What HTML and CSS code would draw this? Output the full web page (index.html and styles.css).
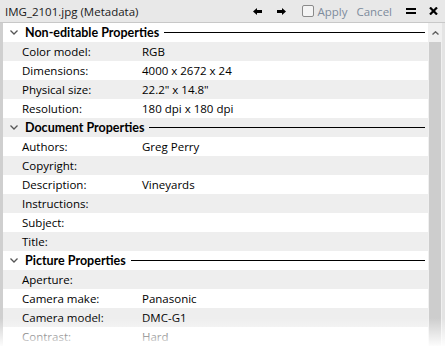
FILE: index.html
```html
<!DOCTYPE html>
<html lang="en">
<head>
    <meta charset="UTF-8">
    <title>IMG_2101.jpg (Metadata)</title>
    <link rel="stylesheet" href="styles.css">
</head>
<body>

    <div class="window">
        <!-- Title bar -->
        <div class="titlebar">
            <span class="title">IMG_2101.jpg (Metadata)</span>
            <div class="tools">
                <svg class="tool back" width="9" height="7" viewBox="0 0 9 7"><path d="M0 3.5L4 0V2H9V5H4V7Z" fill="#000"/></svg>
                <svg class="tool fwd" width="9" height="7" viewBox="0 0 9 7"><path d="M9 3.5L5 0V2H0V5H5V7Z" fill="#000"/></svg>
                <span class="check"></span>
                <span class="tool-text apply">Apply</span>
                <span class="tool-text cancel">Cancel</span>
                <svg class="tool menu" width="10" height="6" viewBox="0 0 10 6"><rect x="0" y="0" width="10" height="2" fill="#000"/><rect x="0" y="4" width="10" height="2" fill="#000"/></svg>
                <svg class="tool close" width="9" height="8" viewBox="0 0 9 8"><path d="M1 0.5L8 7.5M8 0.5L1 7.5" stroke="#000" stroke-width="2.2"/></svg>
            </div>
        </div>

        <!-- Property list -->
        <div class="body">
            <div class="list">
                <div class="row header"><svg class="chevron" width="8" height="5" viewBox="0 0 8 5"><path d="M0.5 0.5L4 4L7.5 0.5" fill="none" stroke="#555" stroke-width="1.3"/></svg><span>Non-editable Properties</span></div>
                <div class="row"><span class="label">Color model:</span><span class="value">RGB</span></div>
                <div class="row"><span class="label">Dimensions:</span><span class="value">4000 x 2672 x 24</span></div>
                <div class="row"><span class="label">Physical size:</span><span class="value">22.2" x 14.8"</span></div>
                <div class="row"><span class="label">Resolution:</span><span class="value">180 dpi x 180 dpi</span></div>

                <div class="row header"><svg class="chevron" width="8" height="5" viewBox="0 0 8 5"><path d="M0.5 0.5L4 4L7.5 0.5" fill="none" stroke="#555" stroke-width="1.3"/></svg><span>Document Properties</span></div>
                <div class="row"><span class="label">Authors:</span><span class="value">Greg Perry</span></div>
                <div class="row"><span class="label">Copyright:</span><span class="value"></span></div>
                <div class="row"><span class="label">Description:</span><span class="value">Vineyards</span></div>
                <div class="row"><span class="label">Instructions:</span><span class="value"></span></div>
                <div class="row"><span class="label">Subject:</span><span class="value"></span></div>
                <div class="row"><span class="label">Title:</span><span class="value"></span></div>

                <div class="row header"><svg class="chevron" width="8" height="5" viewBox="0 0 8 5"><path d="M0.5 0.5L4 4L7.5 0.5" fill="none" stroke="#555" stroke-width="1.3"/></svg><span>Picture Properties</span></div>
                <div class="row"><span class="label">Aperture:</span><span class="value"></span></div>
                <div class="row"><span class="label">Camera make:</span><span class="value">Panasonic</span></div>
                <div class="row"><span class="label">Camera model:</span><span class="value">DMC-G1</span></div>
                <div class="row"><span class="label">Contrast:</span><span class="value">Hard</span></div>
            </div>

            <!-- Scrollbar -->
            <div class="scrollbar">
                <svg class="scroll-up" width="7" height="4" viewBox="0 0 7 4"><path d="M0.5 3.5L3.5 0.8L6.5 3.5" fill="none" stroke="#606060" stroke-width="1.4"/></svg>
                <div class="thumb"></div>
            </div>
        </div>

        <!-- Fade at the bottom edge -->
        <div class="fade"></div>
    </div>

</body>
</html>
```

FILE: styles.css
```css
/* Metadata window */
body {
    margin: 0;
    background-color: #ffffff;
    font-family: "Open Sans", "Noto Sans", sans-serif;
    font-size: 11.5px;
    color: #000;
}

.window {
    position: relative;
    width: 445px;
    height: 346px;
    overflow: hidden;
    display: flex;
    flex-direction: column;
}

/* Title bar */
.titlebar {
    height: 22px;
    flex-shrink: 0;
    background-color: #e8e8e8;
    border-bottom: 1px solid #c8c8c8;
    display: flex;
    align-items: center;
    padding-left: 5px;
    font-size: 11.5px;
}

.title {
    color: #1a1a1a;
    white-space: nowrap;
}

.tools {
    margin-left: auto;
    display: flex;
    align-items: center;
}

.tool {
    display: block;
}

.back {
    margin-right: 15px;
}

.fwd {
    margin-right: 16px;
}

.check {
    width: 10px;
    height: 10px;
    border: 1px solid #8a8a8a;
    border-radius: 2px;
    background-color: #f4f4f4;
    margin-right: 3px;
}

.tool-text {
    color: #7d8b9c;
}

.apply {
    margin-right: 9px;
}

.cancel {
    margin-right: 14px;
}

.menu {
    margin-right: 13px;
}

.close {
    margin-right: 7px;
}

/* List area */
.body {
    flex: 1;
    display: flex;
    min-height: 0;
    border-left: 3px solid #cfcfcf;
    border-right: 3px solid #e4e4e4;
}

.list {
    flex: 1;
    min-width: 0;
}

.row {
    height: 19px;
    display: flex;
    align-items: center;
    white-space: nowrap;
}

.row:nth-child(even) {
    background-color: #eeeeee;
}

.label {
    width: 120px;
    padding-left: 19px;
    flex-shrink: 0;
}

.header {
    font-family: "Lato", "Open Sans", sans-serif;
    font-weight: bold;
    font-size: 12.5px;
}

.chevron {
    margin-left: 7px;
    margin-right: 7px;
    flex-shrink: 0;
}

.header::after {
    content: "";
    flex: 1;
    border-top: 1px solid #000;
    margin-left: 5px;
    margin-right: 3px;
    margin-top: -1px;
}

/* Scrollbar */
.scrollbar {
    width: 14px;
    flex-shrink: 0;
    background-color: #f0f0f0;
    display: flex;
    flex-direction: column;
    align-items: center;
}

.scroll-up {
    margin-top: 8px;
    margin-bottom: 7px;
}

.thumb {
    flex: 1;
    width: 12px;
    background-color: #cdcdcd;
}

.fade {
    position: absolute;
    left: 0;
    right: 0;
    bottom: 0;
    height: 28px;
    background: linear-gradient(rgba(255, 255, 255, 0), rgba(255, 255, 255, 0.95));
}
```
